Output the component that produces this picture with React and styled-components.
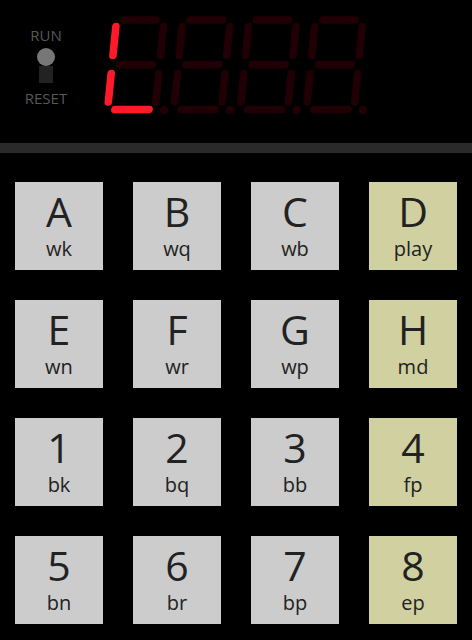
import React from "react";
import styled, { createGlobalStyle } from "styled-components";

const GlobalStyle = createGlobalStyle`
  html, body {
    margin: 0;
    padding: 0;
    background: #000;
  }
  body {
    font-family: "Open Sans", "Noto Sans", sans-serif;
  }
`;

const Page = styled.div`
  width: 472px;
  height: 640px;
  background: #000;
  overflow: hidden;
`;

const Header = styled.div`
  height: 143px;
  display: flex;
  align-items: flex-start;
`;

const Toggle = styled.div`
  width: 46px;
  margin: 27px 0 0 23px;
  display: flex;
  flex-direction: column;
  align-items: center;
  color: #585858;
  font-size: 15px;
  line-height: 16px;
`;

const ToggleLabel = styled.span`
  display: block;
  margin-top: ${(p) => p.$top || 0}px;
`;

const Knob = styled.div`
  width: 18px;
  height: 18px;
  border-radius: 50%;
  background: #777;
  margin-top: 5px;
`;

const Slot = styled.div`
  width: 14px;
  height: 17px;
  background: #222;
`;

const Display = styled.svg`
  display: block;
  margin: 12px 0 0 31px;
`;

const Divider = styled.div`
  height: 10px;
  background: #2a2a2a;
`;

const Keypad = styled.div`
  display: grid;
  grid-template-columns: repeat(4, 88px);
  grid-auto-rows: 88px;
  column-gap: 30px;
  row-gap: 30px;
  padding: 29px 15px 0;
`;

const Key = styled.div`
  background: ${(p) => (p.$accent ? "#d0d0a0" : "#cccccc")};
  color: #222;
  display: flex;
  flex-direction: column;
  align-items: center;
  padding-top: 7px;
  box-sizing: border-box;
`;

const KeyLabel = styled.span`
  font-size: 41px;
  line-height: 44px;
`;

const KeySub = styled.span`
  font-size: 20px;
  line-height: 24px;
  margin-top: 4px;
`;

const ON = "#ff1a2a";
const OFF = "#200004";

// segment lines in the digit's own (unskewed) frame
const SEGMENTS = {
  a: [13.8, 4, 46.2, 4],
  b: [54, 10.5, 54, 39.5],
  c: [54, 57.5, 54, 86],
  d: [13.8, 93.5, 48, 93.5],
  e: [6.5, 57.5, 6.5, 86],
  f: [6.5, 10.5, 6.5, 39.5],
  g: [14, 48.6, 47, 48.6],
};

function Digit({ index, lit = [] }) {
  return (
    <g transform={`translate(${110.4 + 66.3 * index}, 16) skewX(-5.7)`}>
      {Object.entries(SEGMENTS).map(([name, [x1, y1, x2, y2]]) => (
        <line
          key={name}
          x1={x1}
          y1={y1}
          x2={x2}
          y2={y2}
          stroke={lit.includes(name) ? ON : OFF}
          strokeWidth="7.6"
          strokeLinecap="round"
        />
      ))}
      <circle cx="63" cy="94" r="4.2" fill={lit.includes("dp") ? ON : OFF} />
    </g>
  );
}

const keys = [
  ["A", "wk"], ["B", "wq"], ["C", "wb"], ["D", "play", true],
  ["E", "wn"], ["F", "wr"], ["G", "wp"], ["H", "md", true],
  ["1", "bk"], ["2", "bq"], ["3", "bb"], ["4", "fp", true],
  ["5", "bn"], ["6", "br"], ["7", "bp"], ["8", "ep", true],
];

export default function App() {
  return (
    <Page>
      <GlobalStyle />
      <Header>
        <Toggle>
          <ToggleLabel>RUN</ToggleLabel>
          <Knob />
          <Slot />
          <ToggleLabel $top={7}>RESET</ToggleLabel>
        </Toggle>
        <Display width="272" height="106" viewBox="100 12 272 106">
          <Digit index={0} lit={["d", "e", "f"]} />
          <Digit index={1} />
          <Digit index={2} />
          <Digit index={3} />
        </Display>
      </Header>
      <Divider />
      <Keypad>
        {keys.map(([label, sub, accent]) => (
          <Key key={label} $accent={accent}>
            <KeyLabel>{label}</KeyLabel>
            <KeySub>{sub}</KeySub>
          </Key>
        ))}
      </Keypad>
    </Page>
  );
}
